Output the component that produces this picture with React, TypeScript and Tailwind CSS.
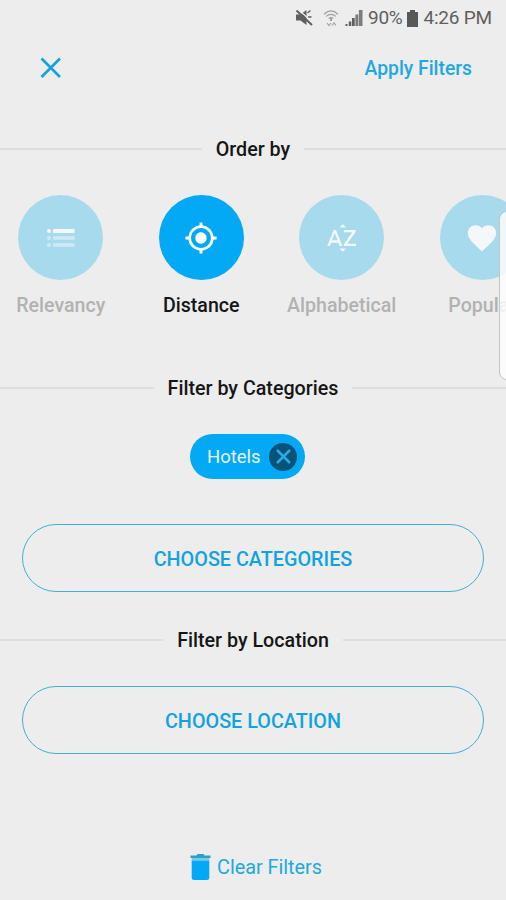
import type { ReactNode } from 'react'
import clsx from 'clsx'
import { MdFavorite, MdMyLocation, MdSortByAlpha } from 'react-icons/md'

function ListIcon() {
  return (
    <svg className="h-6 w-8" viewBox="0 0 32 24" fill="currentColor">
      <circle cx="4" cy="5" r="2" />
      <rect x="8" y="3" width="21.5" height="4" rx="0.6" />
      <g opacity="0.5">
        <circle cx="4" cy="12" r="2" />
        <rect x="8" y="10.2" width="21.5" height="3.6" />
        <circle cx="4" cy="19" r="2" />
        <rect x="8" y="17.2" width="21.5" height="3.6" />
      </g>
    </svg>
  )
}

const orderOptions: { label: string; icon: ReactNode; active?: boolean }[] = [
  { label: 'Relevancy', icon: <ListIcon /> },
  { label: 'Distance', icon: <MdMyLocation className="size-[34px]" />, active: true },
  { label: 'Alphabetical', icon: <MdSortByAlpha className="size-[34px]" /> },
  { label: 'Popular', icon: <MdFavorite className="size-[34px]" /> },
]

function StatusBar() {
  return (
    <div className="flex h-9 items-center justify-end pr-[14px] text-[#5f5f5f]">
      {/* Muted speaker */}
      <svg className="mr-[10px] h-[18px] w-[18px]" viewBox="0 0 18 18">
        <path d="M1 5.5h4.5l6-4.5v15l-6-4.5H1z" fill="currentColor" />
        <path d="M12.5 4l3-2.5M13 8h3.5" stroke="currentColor" strokeWidth="1.4" />
        <path d="M3.5 .5l14 13" stroke="#ededed" strokeWidth="1.2" />
        <path d="M1.5 1.5l15.5 14.5" stroke="currentColor" strokeWidth="2" />
      </svg>
      {/* Wifi with data arrows */}
      <svg className="mr-[6px] h-[18px] w-4" viewBox="0 0 16 18" fill="none" stroke="#a0a0a0">
        <path d="M1 5.2Q8-1.4 15 5.2M3.2 7.4q4.8-4 9.6 0M5.6 9.4q2.4-1.8 4.8 0" strokeWidth="1.2" />
        <path d="M8 9v3" strokeWidth="2" />
        <path d="M4 14l2 2.5L8 14M9 16.5l2-2.5 2 2.5" strokeWidth="1.1" />
      </svg>
      {/* Signal strength */}
      <svg className="mr-[5px] h-[18px] w-[18px]" viewBox="0 0 18 18" fill="currentColor">
        <path d="M.5 15h2v2h-2zM3.8 12.5h2.5V17H3.8zM7 9h2.7v8H7z" />
        <path d="M10.4 5.5h2.9V17h-2.9zM13.9 1h3.6v16h-3.6z" opacity="0.8" />
      </svg>
      <span className="text-[19px] tracking-[-0.3px]">90%</span>
      <svg className="mx-[5px] h-[17px] w-[11px]" viewBox="0 0 11 17">
        <path d="M3 0h5v2h3v15H0V2h3z" fill="#585858" />
      </svg>
      <span className="text-[19px] tracking-[-0.2px]">4:26 PM</span>
    </div>
  )
}

function SectionTitle({ children }: { children: ReactNode }) {
  return (
    <div className="flex h-7 items-center gap-[14px]">
      <div className="h-0.5 flex-1 bg-[#dedede]" />
      <h2 className="pt-px text-[19.7px] leading-7 font-medium text-[#161616]">{children}</h2>
      <div className="h-0.5 flex-1 bg-[#dedede]" />
    </div>
  )
}

function OutlineButton({ children }: { children: ReactNode }) {
  return (
    <button className="mx-[22px] flex h-[68px] items-center justify-center rounded-full border-[1.5px] border-[#42afd2] pt-[3px] text-[19.8px] font-medium text-[#12a2e2]">
      {children}
    </button>
  )
}

export default function App() {
  return (
    <main className="relative flex h-[900px] w-[506px] flex-col overflow-hidden bg-[#ededed] font-['Roboto',sans-serif]">
      <StatusBar />

      <header className="flex h-16 items-center justify-between pr-[34px] pl-10">
        <button aria-label="Close">
          <svg className="size-[22px]" viewBox="0 0 22 22" stroke="#12a2e2" strokeWidth="2.6">
            <path d="M1.5 1.5l18.5 18.5M20 1.5L1.5 20" />
          </svg>
        </button>
        <button className="pt-[3px] text-[19.3px] font-medium text-[#20a8e2]">Apply Filters</button>
      </header>

      <section className="mt-[35px]">
        <SectionTitle>Order by</SectionTitle>
        <div className="mt-8 -ml-[9.5px] flex">
          {orderOptions.map(({ label, icon, active }) => (
            <button key={label} className="flex w-[140.5px] shrink-0 flex-col items-center">
              <span
                className={clsx(
                  'flex size-[85px] items-center justify-center rounded-full',
                  active ? 'bg-[#03a9f4] text-white' : 'bg-[#a8daee] text-[#f4f8fa]',
                )}
              >
                {icon}
              </span>
              <span
                className={clsx(
                  'mt-3 text-[19.6px] leading-7 font-medium',
                  active ? 'text-[#161616]' : 'text-[#b2b2b2]',
                )}
              >
                {label}
              </span>
            </button>
          ))}
        </div>
      </section>

      <section className="mt-[54px] flex flex-col">
        <SectionTitle>Filter by Categories</SectionTitle>
        <div className="mt-8 mr-[11px] mb-[45px] flex h-[45px] w-[115px] items-center justify-between self-center rounded-full bg-[#03a9f4] pr-2 pl-[17px]">
          <span className="pt-[3px] text-[18.5px] text-[#e6f6fd]">Hotels</span>
          <button
            aria-label="Remove Hotels"
            className="flex size-7 items-center justify-center rounded-full bg-[#07537a]"
          >
            <svg className="size-[15px]" viewBox="0 0 15 15" stroke="#29a9e6" strokeWidth="2.5">
              <path d="M1 1l13 13M14 1L1 14" />
            </svg>
          </button>
        </div>
        <OutlineButton>CHOOSE CATEGORIES</OutlineButton>
      </section>

      <section className="mt-[34px] flex flex-col gap-8">
        <SectionTitle>Filter by Location</SectionTitle>
        <OutlineButton>CHOOSE LOCATION</OutlineButton>
      </section>

      <button className="mt-auto mb-[19px] flex h-7 items-center gap-[6px] self-center pl-[6px] text-[19.8px] text-[#20a8e2]">
        <svg className="h-[26px] w-[21px]" viewBox="0 0 20 26">
          <path d="M0 1.5h6L7 0h6l1 1.5h6V4H0z" fill="#2a9fca" />
          <path d="M1.2 4h17.6v2.5H1.2z" fill="#79c7e4" />
          <path d="M1.2 6.5h17.6v17q0 2.5-2.5 2.5H3.7q-2.5 0-2.5-2.5z" fill="#03a9f4" />
        </svg>
        <span className="pt-px">Clear Filters</span>
      </button>

      {/* Edge panel handle */}
      <div className="absolute top-[211px] -right-3 h-[169px] w-[19px] rounded-lg border border-[#c4c4c4] bg-white/80" />
    </main>
  )
}
